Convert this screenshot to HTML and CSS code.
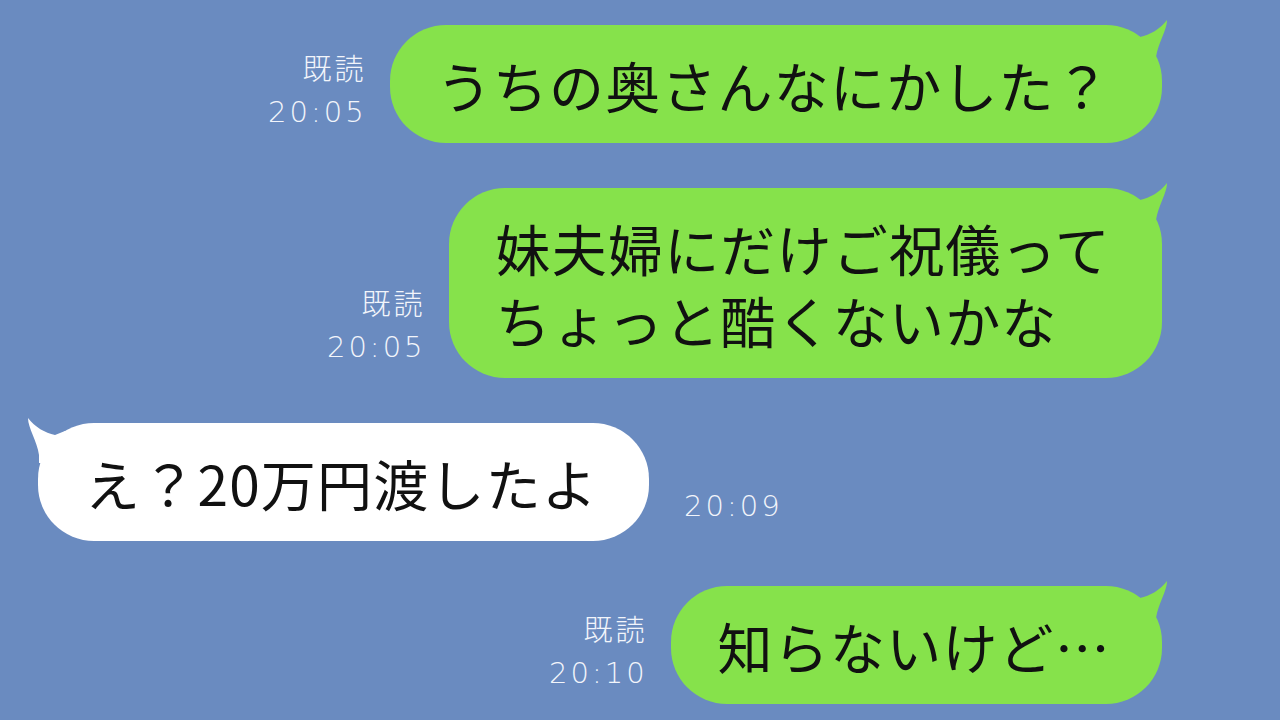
FILE: index.html
```html
<!DOCTYPE html>
<html lang="ja">
<head>
  <meta charset="utf-8">
  <title>トーク</title>
  <link rel="stylesheet" href="styles.css">
</head>
<body>
  <div class="chat">
    <!-- 自分のメッセージ -->
    <div class="row sent">
      <div class="meta"><span>既読</span><span>20:05</span></div>
      <div class="bubble green">
        うちの奥さんなにかした？
        <svg class="tail" width="40" height="50" viewBox="0 0 40 50"><path d="M0 18 L10 22 C20 20 30 14 37 5 C37 15 28 28 26 42 L26 50 L0 50 Z"/></svg>
      </div>
    </div>

    <div class="row sent">
      <div class="meta"><span>既読</span><span>20:05</span></div>
      <div class="bubble green">
        妹夫婦にだけご祝儀って<br>ちょっと酷くないかな
        <svg class="tail" width="40" height="50" viewBox="0 0 40 50"><path d="M0 18 L10 22 C20 20 30 14 37 5 C37 15 28 28 26 42 L26 50 L0 50 Z"/></svg>
      </div>
    </div>

    <!-- 相手のメッセージ -->
    <div class="row received">
      <div class="bubble white">
        え？20万円渡したよ
        <svg class="tail" width="40" height="50" viewBox="0 0 40 50"><path d="M0 18 L10 22 C20 20 30 14 37 5 C37 15 28 28 26 42 L26 50 L0 50 Z"/></svg>
      </div>
      <div class="meta"><span>20:09</span></div>
    </div>

    <div class="row sent">
      <div class="meta"><span>既読</span><span>20:10</span></div>
      <div class="bubble green">
        知らないけど…
        <svg class="tail" width="40" height="50" viewBox="0 0 40 50"><path d="M0 18 L10 22 C20 20 30 14 37 5 C37 15 28 28 26 42 L26 50 L0 50 Z"/></svg>
      </div>
    </div>
  </div>
</body>
</html>
```

FILE: styles.css
```css
/* トーク画面 */
body {
  margin: 0;
  height: 720px;
  overflow: hidden;
  background: #6a8bc0;
  font-family: "Noto Sans CJK JP", "Noto Sans", sans-serif;
}
.chat {
  display: flex;
  flex-direction: column;
  gap: 45px;
  padding: 25px 118px 0 38px;
}
.row {
  display: flex;
  align-items: flex-end;
}
.sent {
  justify-content: flex-end;
}
.received {
  justify-content: flex-start;
}
.bubble {
  position: relative;
  font-size: 55px;
  line-height: 72px;
  letter-spacing: 1.2px;
  color: #111;
  padding: 23px 51px 23px 47px;
  border-radius: 56px;
  white-space: nowrap;
}
.green {
  background: #86e24b;
}
.white {
  background: #fff;
}
.tail {
  position: absolute;
  top: -10px;
}
.green .tail {
  right: -8px;
  fill: #86e24b;
}
.white .tail {
  left: -13px;
  fill: #fff;
  transform: scaleX(-1);
}
/* 既読・時刻 */
.meta {
  display: flex;
  flex-direction: column;
  align-items: flex-end;
  font-family: "DejaVu Sans", "Noto Sans CJK JP", sans-serif;
  font-size: 29px;
  line-height: 42px;
  font-weight: 200;
  letter-spacing: 3px;
  color: #f2f5fb;
  margin-bottom: 10px;
}
.sent .meta {
  margin-right: 23px;
}
.received .meta {
  margin-left: 35px;
  margin-bottom: 14px;
}
```
